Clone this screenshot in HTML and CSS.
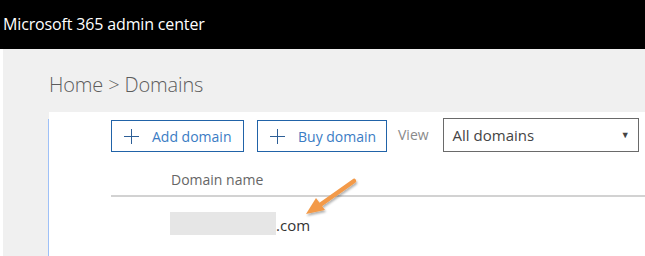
FILE: index.html
```html
<!DOCTYPE html>
<html>
<head>
<meta charset="utf-8">
<link rel="stylesheet" href="styles.css">
</head>
<body>
<header class="topbar"><span class="app-title">Microsoft 365 admin center</span></header>
<main class="main">
  <div class="breadcrumb">Home &gt; Domains</div>
  <section class="panel">
    <div class="rail"></div>
    <div class="content">
      <div class="toolbar">
        <button class="btn btn-add"><span class="plus"></span>Add domain</button>
        <button class="btn btn-buy"><span class="plus"></span>Buy domain</button>
        <span class="view-label">View</span>
        <div class="select">All domains<span class="caret">&#9660;</span></div>
      </div>
      <div class="table">
        <div class="thead">Domain name</div>
        <div class="row"><span class="redacted"></span><span class="tld">.com</span></div>
      </div>
      <svg class="arrow" width="70" height="50" viewBox="0 0 70 50">
        <defs>
          <filter id="sh" x="-20%" y="-20%" width="140%" height="140%">
            <feDropShadow dx="1" dy="2" stdDeviation="1.2" flood-color="#000" flood-opacity="0.3"/>
          </filter>
        </defs>
        <g filter="url(#sh)">
          <line x1="58" y1="6" x2="24" y2="30" stroke="#f39a48" stroke-width="4.5" stroke-linecap="round"/>
          <polygon points="10,39 20,23 29,35" fill="#f39a48"/>
        </g>
      </svg>
    </div>
  </section>
</main>
</body>
</html>
```
FILE: styles.css
```css
html, body {
  margin: 0;
  padding: 0;
  height: 100%;
  background: #ffffff;
  font-family: "Open Sans", "Noto Sans", sans-serif;
  overflow: hidden;
}
.topbar {
  height: 49px;
  background: #000;
  display: flex;
  align-items: center;
  padding-left: 3px;
  padding-bottom: 2px;
  box-sizing: border-box;
}
.app-title {
  color: #fff;
  font-size: 16px;
  letter-spacing: -0.15px;
}
.main {
  margin-left: 3px;
  background: #f0f0f0;
  height: calc(100% - 49px);
  padding-left: 45px;
  display: flex;
  flex-direction: column;
}
.breadcrumb {
  height: 63px;
  box-sizing: border-box;
  padding-top: 22px;
  padding-left: 1px;
  font-size: 20px;
  font-weight: 300;
  color: #5c5c5c;
  letter-spacing: -0.15px;
}
.panel {
  flex: 1;
  display: flex;
}
.rail {
  width: 1px;
  margin-top: 7px;
  background: #9ec0f7;
}
.content {
  flex: 1;
  background: #fff;
  position: relative;
  padding-top: 6px;
  padding-left: 62px;
}
.toolbar {
  display: flex;
  align-items: flex-end;
  height: 34px;
}
.btn {
  height: 32px;
  box-sizing: border-box;
  border: 1px solid #2163a8;
  background: #fff;
  color: #3b7cc4;
  font-family: inherit;
  font-size: 14px;
  padding: 0 0 0 12px;
  display: flex;
  align-items: center;
  white-space: nowrap;
  flex-shrink: 0;
  cursor: pointer;
}
.btn-add { width: 133px; margin-right: 13px; }
.btn-buy { width: 130px; margin-right: 11px; }
.plus {
  width: 15px;
  height: 15px;
  margin-right: 13px;
  flex-shrink: 0;
  display: inline-block;
  background:
    linear-gradient(#2d5f97, #2d5f97) center / 15px 1px no-repeat,
    linear-gradient(#2d5f97, #2d5f97) center / 1px 15px no-repeat;
}
.view-label {
  color: #8a8a8a;
  font-size: 14px;
  height: 32px;
  line-height: 30px;
  margin-right: 14px;
}
.select {
  width: 196px;
  flex-shrink: 0;
  height: 34px;
  box-sizing: border-box;
  border: 1px solid #6a6a6a;
  color: #444;
  font-size: 15px;
  display: flex;
  align-items: center;
  justify-content: space-between;
  padding: 0 8px 0 9px;
}
.caret {
  font-size: 9px;
  color: #444;
  margin-bottom: 1px;
}
.table {
  margin-top: 18px;
}
.thead {
  padding-left: 60px;
  font-size: 14px;
  color: #666;
  height: 27px;
  box-sizing: border-box;
  border-bottom: 2px solid #d2d2d2;
}
.row {
  display: flex;
  align-items: flex-end;
  padding-left: 59px;
  padding-top: 15px;
}
.redacted {
  width: 106px;
  height: 23px;
  background: #e6e6e6;
}
.tld {
  font-size: 15px;
  color: #333;
  line-height: 20px;
}
.arrow {
  position: absolute;
  left: 247px;
  top: 63px;
}
```
